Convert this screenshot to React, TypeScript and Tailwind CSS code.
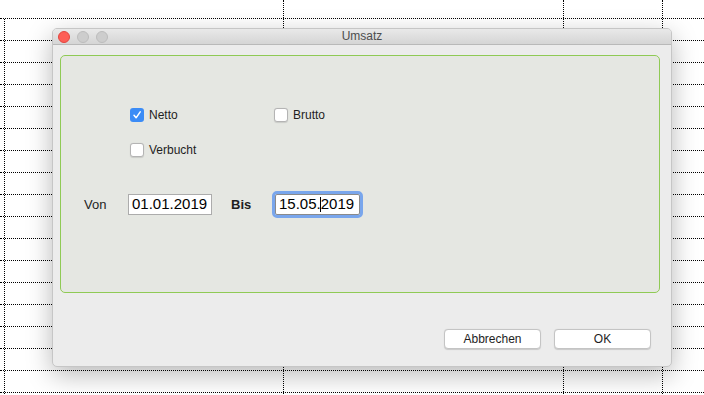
import React from "react";

const cols = [5, 279, 280, 99, 41];

function GridRow({ first }: { first?: boolean }) {
  return (
    <div className={`flex border-b border-dotted border-black ${first ? "h-[19px]" : "h-[22px]"}`}>
      {cols.map((w, i) => (
        <div
          key={i}
          style={{ width: w }}
          className={`h-full shrink-0 ${i < cols.length - 1 && !(first && i === 0) ? "border-r border-dotted border-black" : ""}`}
        />
      ))}
    </div>
  );
}

function CheckBox({ checked, label }: { checked?: boolean; label: string }) {
  return (
    <label className="flex h-[18px] items-center gap-[5px] text-[12px] text-[#1e1e1e]">
      {checked ? (
        <span className="flex h-[14px] w-[14px] items-center justify-center rounded-[3px] bg-[#3b8cf6]">
          <svg width="10" height="10" viewBox="0 0 10 10">
            <path d="M2 5.3 L4.1 7.8 L8.2 1.8" fill="none" stroke="white" strokeWidth="1.5" strokeLinecap="round" strokeLinejoin="round" />
          </svg>
        </span>
      ) : (
        <span className="h-[14px] w-[14px] rounded-[3px] border border-[#b4b4b4] bg-white shadow-[0_0.5px_1px_rgba(0,0,0,0.12)]" />
      )}
      <span>{label}</span>
    </label>
  );
}

export default function App() {
  return (
    <div className="relative h-[395px] w-[704px] overflow-hidden bg-white font-['Liberation_Sans',Arial,sans-serif]">
      <div>
        <GridRow first />
        {Array.from({ length: 18 }).map((_, i) => (
          <GridRow key={i} />
        ))}
      </div>

      {/* dialog window */}
      <div className="absolute left-[52px] top-[28px] flex h-[339px] w-[620px] flex-col overflow-hidden rounded-[5px] border border-[#c6c6c6] bg-[#ececec] shadow-[0_8px_26px_rgba(0,0,0,0.28)]">
        <div className="relative flex h-[16px] shrink-0 items-center border-b border-[#b9b9b9] bg-gradient-to-b from-[#e9e9e9] to-[#d5d5d5] pl-[5px]">
          <div className="flex gap-[7px]">
            <span className="h-[12px] w-[12px] rounded-full border border-[#e2463f] bg-[#fd5e56]" />
            <span className="h-[12px] w-[12px] rounded-full border border-[#bcbcbc] bg-[#cdcdcd]" />
            <span className="h-[12px] w-[12px] rounded-full border border-[#bcbcbc] bg-[#cdcdcd]" />
          </div>
          <span className="absolute inset-x-0 text-center text-[12px] leading-[15px] text-[#4d4d4d]">Umsatz</span>
        </div>

        <div className="ml-[7px] mt-[10px] h-[238px] w-[600px] rounded-[5px] border border-[#8fca55] bg-[#e5e7e2] pl-[23px] pt-[50px]">
          <div className="ml-[46px] flex flex-col gap-[17px]">
            <div className="flex">
              <div className="w-[144px]">
                <CheckBox checked label="Netto" />
              </div>
              <CheckBox label="Brutto" />
            </div>
            <CheckBox label="Verbucht" />
          </div>

          <div className="mt-[35px] flex items-center text-[13px] text-[#1e1e1e]">
            <span className="w-[44px]">Von</span>
            <div className="flex h-[21px] w-[84px] items-center border border-[#acacac] bg-white pl-[3px] text-[15px] text-black">
              01.01.2019
            </div>
            <span className="ml-[19px] w-[44px] font-bold">Bis</span>
            <div className="flex h-[21px] w-[85px] items-center rounded-[2px] border border-[#8a8a8a] bg-white pl-[3px] text-[15px] text-black outline outline-[3px] outline-[#79a6ec]">
              15.05.<span className="-mx-[0.5px] inline-block h-[15px] w-[1px] bg-black" />2019
            </div>
          </div>
        </div>

        <div className="mr-[20px] mt-[36px] flex justify-end gap-[13px]">
          <button className="h-[20px] w-[97px] rounded-[4px] border border-[#c4c4c4] bg-white text-[12px] text-[#1e1e1e] shadow-[0_0.5px_1px_rgba(0,0,0,0.15)]">
            Abbrechen
          </button>
          <button className="h-[20px] w-[97px] rounded-[4px] border border-[#c4c4c4] bg-white text-[12px] text-[#1e1e1e] shadow-[0_0.5px_1px_rgba(0,0,0,0.15)]">
            OK
          </button>
        </div>
      </div>
    </div>
  );
}
